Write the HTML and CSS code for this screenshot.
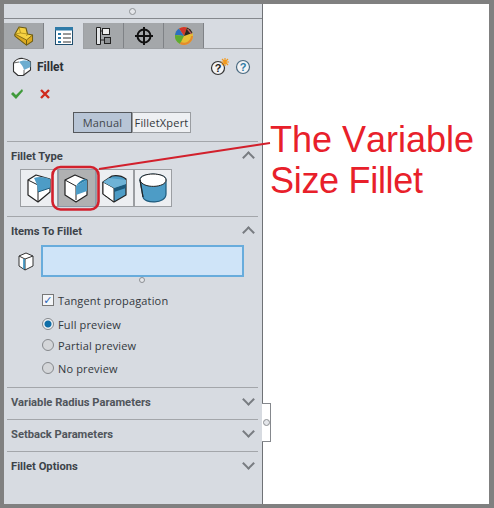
FILE: index.html
```html
<!DOCTYPE html>
<html lang="en">
<head>
    <meta charset="UTF-8">
    <title>Fillet</title>
    <link rel="stylesheet" href="styles.css">
</head>
<body>
    <div class="window">
        <div class="panel">
            <div class="grip"><span class="dot"></span></div>
            <div class="tabs">
                <div class="tab">
                    <svg width="20" height="20" viewBox="0 0 20 20"><path d="M1 8 5 1l7 1 1.500 6 5 1v6l-6 4L1 10z" fill="#f6d243" stroke="#6b5a12" stroke-width="1.100" stroke-linejoin="round"/><path d="M1 8 12.500 14v5L1 10zM12.500 14l6-5v6l-6 4z" fill="#dca91f" stroke="#6b5a12" stroke-width=".8"/><path d="M5 1 6.500 7 1 8M6.500 7l7 1-1 2" fill="none" stroke="#a88a1c" stroke-width=".8"/></svg>
                </div>
                <div class="tab active">
                    <svg width="20" height="20" viewBox="0 0 20 20"><rect x="1.500" y="1.500" width="17" height="17" fill="#fff" stroke="#1f4e6e"/><rect x="1" y="1" width="18" height="3.500" fill="#2f7ba8"/><path d="M4 7h3v2H4zM4 11h3v2H4zM4 15h3v2H4z" fill="#2f7ba8"/><path d="M9 8h8M9 12h8M9 16h8" stroke="#333"/></svg>
                </div>
                <div class="tab">
                    <svg width="18" height="20" viewBox="0 0 18 20"><path d="M1.500 1.500h4v17h-4zM5.500 5h2M5.500 14h4" fill="#e4e6e8" stroke="#222"/><rect x="7.500" y="2.500" width="7" height="6" fill="#eee" stroke="#222"/><rect x="9.500" y="11.500" width="6" height="6" fill="#8b8e91" stroke="#222"/></svg>
                </div>
                <div class="tab">
                    <svg width="20" height="20" viewBox="0 0 20 20"><circle cx="10" cy="10" r="6.500" fill="none" stroke="#111" stroke-width="2"/><path d="M10 1v18M1 10h18" stroke="#111" stroke-width="2"/></svg>
                </div>
                <div class="tab">
                    <svg width="20" height="20" viewBox="0 0 20 20"><circle cx="10" cy="10" r="9" fill="#e6bf35"/><path d="M10 10 5 2.500A9 9 0 0 1 13 1.500z" fill="#d2342c"/><path d="M10 10 1 9A9 9 0 0 1 5 2.500z" fill="#2c6fc0"/><path d="M10 10 1 9A9 9 0 0 0 6 18z" fill="#5cab32"/><path d="M10 10 13 1.500A9 9 0 0 1 18.500 7z" fill="#2a2422"/><path d="m13.500 3 4 5" stroke="#b9635c" stroke-width="1.300"/><path d="M6 18A9 9 0 0 0 19 10l-2 0a7 7 0 0 1-10 6z" fill="#e58a2e"/></svg>
                </div>
            </div>

            <div class="title-row">
                <svg class="fillet-icon" width="20" height="20" viewBox="0 0 20 20"><path d="M1.500 6C3 3 7 1 11 1.500c3 .3 6 2 7.500 3.500v8L11 18.500l-5 0-4.500-4z" fill="#fff" stroke="#333" stroke-width="1.100" stroke-linejoin="round"/><path d="M7 5c3-2 8-2 11.500 0v5L12 13C11 9 9 7 7 5z" fill="#6cadd0"/><path d="M12 13v5.500M1.500 6 7 5" fill="none" stroke="#444" stroke-width=".8"/></svg>
                <span class="title">Fillet</span>
                <svg class="help first" width="20" height="20" viewBox="0 0 20 20"><circle cx="8" cy="11" r="6.500" fill="#f2f3f5" stroke="#333" stroke-width="1.200"/><text x="8" y="15" class="q">?</text><path d="M15 1v8M11 5h8M12 2l6 6M18 2l-6 6" stroke="#f39a1e" stroke-width="1.200"/></svg>
                <svg class="help" width="16" height="16" viewBox="0 0 16 16"><circle cx="8" cy="8" r="6.500" fill="#f2f3f5" stroke="#4a6a80" stroke-width="1.200"/><text x="8" y="12" class="q blue">?</text></svg>
            </div>

            <div class="ok-row">
                <svg width="14" height="12" viewBox="0 0 14 12"><path d="m1 6 2-2 3 3 6-6 1 2-7 8z" fill="#3f9a3a"/></svg>
                <svg width="12" height="12" viewBox="0 0 12 12"><path d="m2 2 8 8M10 2l-8 8" stroke="#cf2a1c" stroke-width="2.400"/></svg>
            </div>

            <div class="switch">
                <span class="switch-btn on">Manual</span>
                <span class="switch-btn">FilletXpert</span>
            </div>

            <section class="group fillet-type">
                <div class="group-head"><span>Fillet Type</span><i class="chev up"></i></div>
                <div class="type-btns">
                    <div class="type-btn">
                        <svg width="30" height="30" viewBox="0 0 30 30"><path d="M4 7 12 2l14 4v13l-12 10-10-7z" fill="#fff" stroke="#222" stroke-width="1.200" stroke-linejoin="round"/><path d="M4 7l10 5v17" fill="none" stroke="#222"/><path d="M10 5c5-2 11-1 16 1v9l-12 4-1-7c-1-3-2-5-3-7z" fill="#4d9cc6"/><path d="M14 19l12-4" stroke="#1d5a7c"/></svg>
                    </div>
                    <div class="type-btn active">
                        <svg width="30" height="30" viewBox="0 0 30 30"><path d="M3 7 13 2l12 5v15l-11 7-11-7z" fill="#fff" stroke="#222" stroke-width="1.200" stroke-linejoin="round"/><path d="M3 7l11 6v14" fill="none" stroke="#222"/><path d="M14 13 25 7v11l-11 4z" fill="#4d9cc6"/><path d="M14 13c2-3 5-6 9-7l2 1-11 6z" fill="#2a7ea8"/></svg>
                    </div>
                    <div class="type-btn">
                        <svg width="30" height="30" viewBox="0 0 30 30"><path d="M3 9 12 3c6-1 10 0 14 3v16l-12 7-11-8z" fill="#4d9cc6" stroke="#222" stroke-width="1.200" stroke-linejoin="round"/><path d="M3 9v12l11 8V15z" fill="#fff" stroke="#222"/><path d="M14 15 26 11v4l-12 4z" fill="#1d5a7c"/><path d="M14 15 3 9l6-4 17 2v4z" fill="#6fb3d6"/></svg>
                    </div>
                    <div class="type-btn">
                        <svg width="32" height="32" viewBox="0 0 32 32"><path d="M3 8C3 0 29 0 29 8v14c0 10-22 10-23 3z" fill="#4d9cc6" stroke="#1d5a7c" stroke-width="1.200"/><path d="M3 8C3 0 29 0 29 8c0 8-24 9-26 0z" fill="#fff" stroke="#222"/><path d="M3 8l3 17" stroke="#222" stroke-width="1.200"/></svg>
                    </div>
                </div>
            </section>

            <section class="group items">
                <div class="group-head"><span>Items To Fillet</span><i class="chev up"></i></div>
                <div class="items-row">
                    <svg width="18" height="20" viewBox="0 0 18 20"><path d="M2 5 9 2l7 3v10l-8 4-6-4z" fill="#fff" stroke="#333"/><path d="M2 5l6 3v11M8 8l8-3" fill="none" stroke="#333"/><path d="M7 8v10" stroke="#2f8dbd" stroke-width="1.600"/></svg>
                    <div class="select-box"></div>
                </div>
                <div class="resize"><span class="dot"></span></div>
                <label class="check-row"><span class="check">&#10003;</span>Tangent propagation</label>
                <div class="radios">
                    <label class="radio-row r1"><span class="radio on"></span>Full preview</label>
                    <label class="radio-row r2"><span class="radio"></span>Partial preview</label>
                    <label class="radio-row r3"><span class="radio"></span>No preview</label>
                </div>
            </section>

            <section class="group closed">
                <div class="group-head"><span class="soft">Variable Radius Parameters</span><i class="chev"></i></div>
            </section>
            <section class="group closed">
                <div class="group-head"><span class="soft">Setback Parameters</span><i class="chev"></i></div>
            </section>
            <section class="group closed">
                <div class="group-head"><span>Fillet Options</span><i class="chev"></i></div>
            </section>
        </div>
        <div class="canvas"></div>
    </div>

    <div class="handle"><span class="dot"></span></div>

    <svg class="callout" width="494" height="508" viewBox="0 0 494 508">
        <rect x="52.500" y="167" width="46" height="42.500" rx="8" fill="none" stroke="#d2202c" stroke-width="2.600"/>
        <path d="M99 169 270 143" stroke="#d2202c" stroke-width="2"/>
    </svg>
    <div class="note">The Variable<br><span class="note-tight">Size Fillet</span></div>
</body>
</html>
```

FILE: styles.css
```css
body {
    margin: 0;
    background: #808080;
    font-family: "Open Sans", sans-serif;
    font-size: 11px;
    color: #33383d;
}
.window {
    display: flex;
    width: 486px;
    height: 500px;
    margin: 4px 5px 4px 3px;
    overflow: hidden;
}
.panel {
    width: 258px;
    margin-left: 1px;
    background: #d7dbe1;
    border-right: 1px solid #6f7276;
}
.canvas {
    flex: 1;
    background: #fff;
}
.dot {
    display: block;
    width: 5px;
    height: 5px;
    border: 1px solid #8d9094;
    border-radius: 50%;
    background: #e4e6ea;
}
.grip {
    display: flex;
    justify-content: center;
    align-items: center;
    height: 14px;
    padding-right: 2px;
    border-bottom: 1px solid #85888d;
}

/* tabs */
.tabs {
    display: flex;
    height: 25px;
    margin-top: 4px;
    border-bottom: 1px solid #9da0a4;
}
.tab {
    display: flex;
    width: 39px;
    height: 25px;
    align-items: center;
    justify-content: center;
    background: #a4a7aa;
    border-right: 1px solid #7f8286;
}
.tab.active {
    height: 26px;
    background: #d7dbe1;
    border-right-color: #9da0a4;
}

.title-row {
    display: flex;
    align-items: center;
    height: 20px;
    margin-top: 8px;
    padding-left: 8px;
}
.fillet-icon {
    margin-right: 5px;
}
.title {
    flex: 1;
    font-family: Roboto, sans-serif;
    font-size: 12px;
    font-weight: bold;
    color: #2c3035;
}
.help {
    margin-right: 11px;
}
.help.first {
    margin-right: 5px;
}
.q {
    font-family: "Liberation Sans", sans-serif;
    font-size: 11px;
    font-weight: bold;
    text-anchor: middle;
    fill: #222;
}
.q.blue {
    fill: #2d7ba6;
}
.ok-row {
    display: flex;
    align-items: center;
    gap: 15px;
    height: 14px;
    margin-top: 10px;
    padding-left: 6px;
}

.switch {
    display: flex;
    justify-content: center;
    height: 21px;
    margin: 11px 0 8px;
    padding-right: 2px;
}
.switch-btn {
    display: flex;
    align-items: center;
    justify-content: center;
    width: 57px;
    background: #eef0f3;
    border: 1px solid #9a9da1;
    letter-spacing: .2px;
}
.switch-btn.on {
    background: #b8c5d6;
    border-color: #55585c;
    color: #43474c;
}

/* property groups */
.group {
    margin: 0 4px 0 3px;
    border-top: 1px solid #a3a6aa;
}
.group-head {
    display: flex;
    align-items: center;
    justify-content: space-between;
    box-sizing: border-box;
    height: 31px;
    padding: 0 5px 3px 4px;
    font-family: Roboto, sans-serif;
    font-size: 11.200px;
    font-weight: bold;
    color: #3d4349;
}
.soft {
    color: #50555b;
}
.chev {
    width: 7px;
    height: 7px;
    margin: 0 0 6px 0;
    border-right: 2px solid #787c81;
    border-bottom: 2px solid #787c81;
    transform: rotate(45deg);
}
.chev.up {
    margin-bottom: -3px;
    transform: rotate(225deg);
}
.type-btns {
    display: flex;
    padding-left: 13px;
    height: 38px;
    margin-top: -4px;
    margin-bottom: 9px;
}
.type-btn {
    display: flex;
    align-items: center;
    justify-content: center;
    width: 36px;
    height: 36px;
    background: #eceef1;
    border: 1px solid #9b9ea2;
}
.type-btn.active {
    background: #b0b1b2;
    border-color: #8c9aa8;
}

.items-row {
    display: flex;
    align-items: center;
    margin-top: -3px;
    padding-left: 10px;
}
.items-row svg {
    margin-right: 6px;
}
.select-box {
    width: 199px;
    height: 28px;
    background: #cfe4f8;
    border: 2px solid #68acdc;
}
.resize {
    display: flex;
    justify-content: center;
    height: 8px;
    padding-left: 18px;
}
.resize .dot {
    width: 4px;
    height: 4px;
}
.check-row {
    display: flex;
    align-items: center;
    height: 14px;
    margin-top: 8px;
    padding-left: 35px;
    letter-spacing: .15px;
}
.check {
    display: flex;
    align-items: center;
    justify-content: center;
    width: 10px;
    height: 10px;
    margin-right: 4px;
    background: #f3f5f8;
    border: 1px solid #777;
    color: #2a66b8;
    font-family: "DejaVu Sans", sans-serif;
    font-weight: bold;
    font-size: 11px;
}
.radios {
    padding: 0 0 12px 35px;
}
.radio-row {
    display: flex;
    align-items: center;
    height: 14px;
    letter-spacing: .15px;
}
.r1 {
    margin-top: 10px;
}
.r2 {
    margin-top: 7px;
}
.r3 {
    margin-top: 9px;
}
.radio {
    width: 10px;
    height: 10px;
    margin-right: 4px;
    border: 1px solid #85888c;
    border-radius: 50%;
    background: #d4d6d9;
}
.radio.on {
    background: radial-gradient(circle, #0f6ea8 0 3px, #eef0f3 4px);
}

/* things that lie over the window */
.handle {
    position: absolute;
    left: 262px;
    top: 403px;
    display: flex;
    align-items: center;
    justify-content: center;
    width: 8px;
    height: 37px;
    background: #fff;
    border: 1px solid #85888d;
    border-left: 0;
}
.callout {
    position: absolute;
    left: 0;
    top: 0;
    pointer-events: none;
}
.note {
    position: absolute;
    left: 270px;
    top: 119px;
    font-family: "Liberation Sans", sans-serif;
    font-kerning: none;
    font-size: 36px;
    line-height: 41px;
    color: #e8202a;
}
.note-tight {
    letter-spacing: -.3px;
}
```
